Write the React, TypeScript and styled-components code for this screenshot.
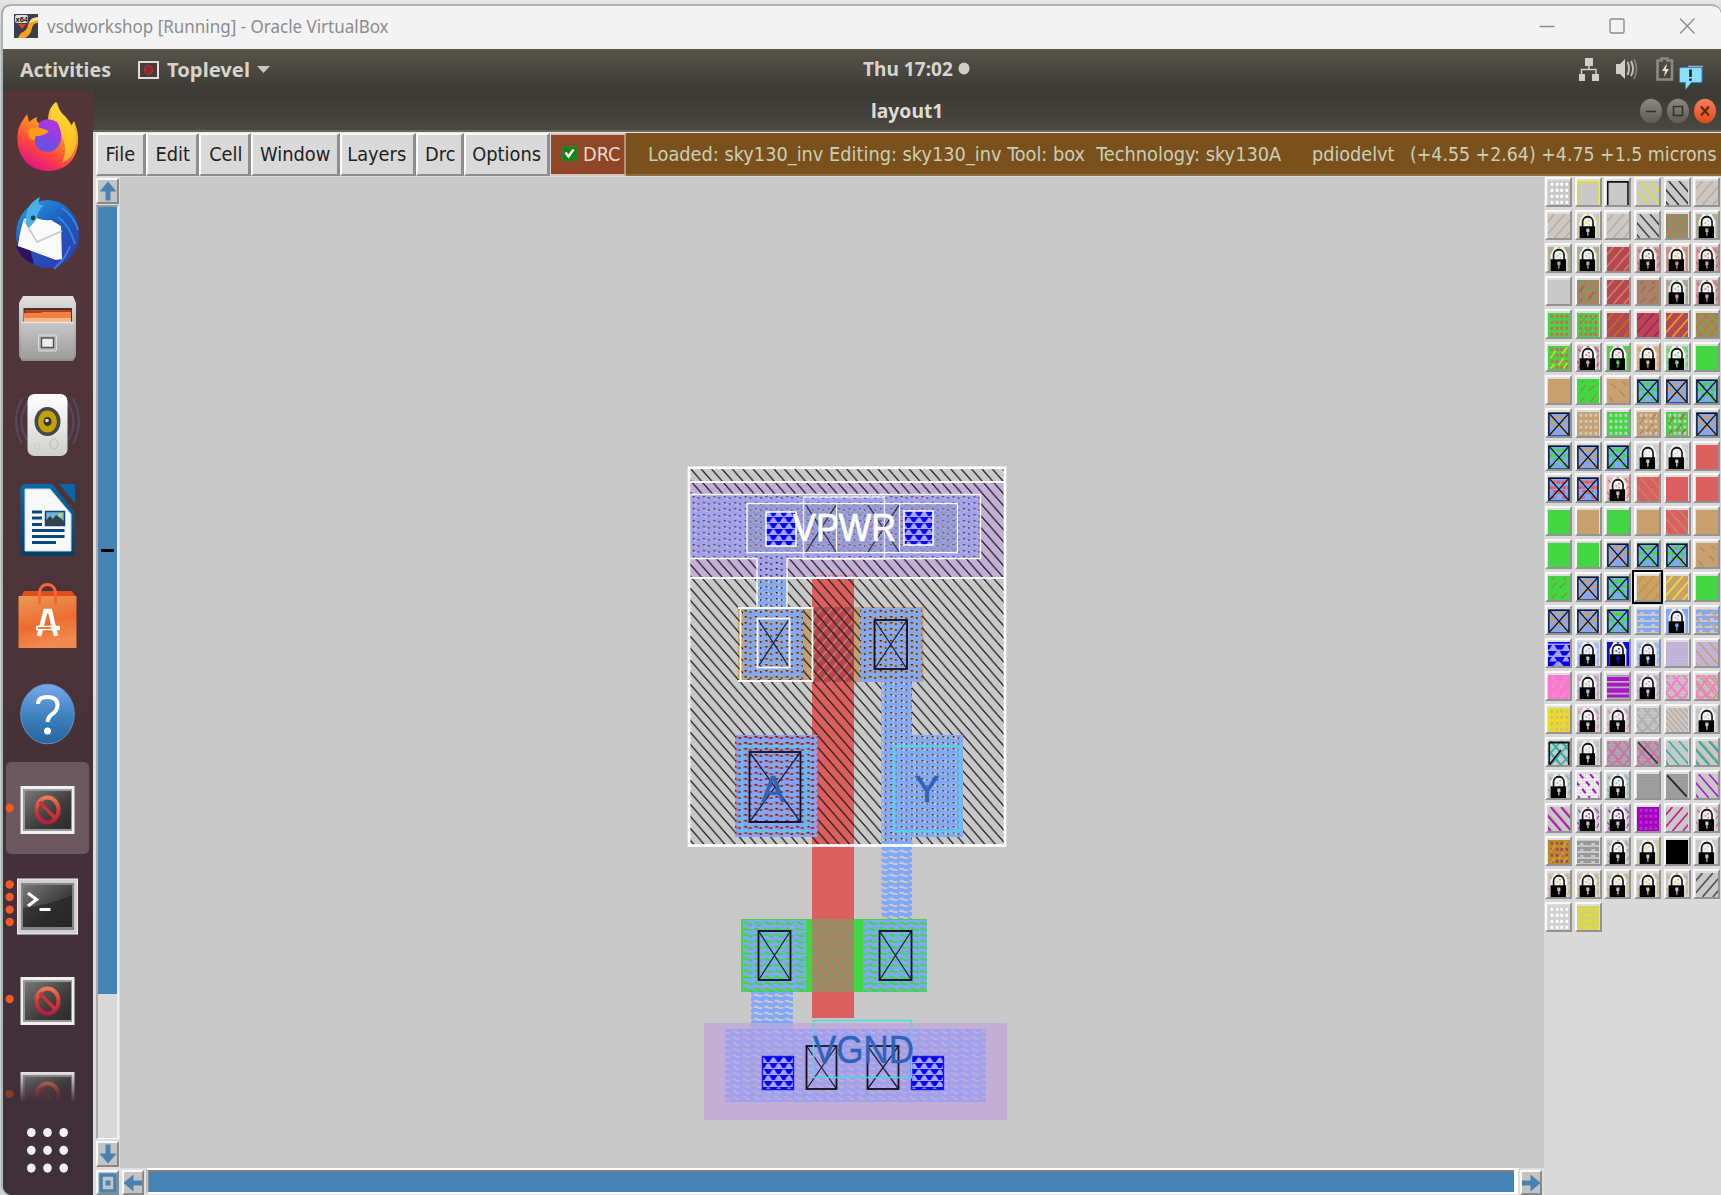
import React from "react";
import styled, { createGlobalStyle } from "styled-components";

const Global = createGlobalStyle`
  * { box-sizing: border-box; }
  html, body { margin: 0; padding: 0; }
  body { width: 1721px; height: 1195px; overflow: hidden; background: #e3e3e3; }
  svg { display: block; }
`;

const tk = `"DejaVu Sans Condensed", "DejaVu Sans", sans-serif`;
const shell = `"Noto Sans", "Open Sans", sans-serif`;

const Desktop = styled.div`
  width: 1721px;
  height: 1195px;
  padding: 4px 0 0 1px;
  background: linear-gradient(180deg, #e6e6e6 0, #e0e0e0 6px, #c9d3d3 30px, #c9d3d3);
  overflow: hidden;
`;
const VmWindow = styled.div`
  height: 1191px;
  border: 2px solid #b0b2b0;
  border-bottom: 0;
  border-right: 0;
  border-radius: 9px 9px 0 10px;
  overflow: hidden;
  background: #3b3a35;
  display: flex;
  flex-direction: column;
`;
const HostTitle = styled.header`
  height: 43px;
  flex: none;
  background: #f3f3f3;
  display: flex;
  align-items: center;
  padding: 0 26px 3px 11px;
`;
const Label = styled.span<{ $w: number; $size: number; $scale: number; $color: string; $bold?: number; $font?: string }>`
  display: block;
  flex: none;
  width: ${(p) => p.$w}px;
  font-family: ${(p) => p.$font ?? shell};
  font-stretch: ${(p) => (p.$font ? "condensed" : "normal")};
  font-size: ${(p) => p.$size}px;
  font-weight: ${(p) => p.$bold ?? 400};
  line-height: 1.2;
  color: ${(p) => p.$color};
  white-space: pre;
  transform: scaleX(${(p) => p.$scale});
  transform-origin: left center;
`;
const Spacer = styled.div<{ $w?: number }>`
  flex: ${(p) => (p.$w ? "none" : "1")};
  width: ${(p) => (p.$w ? p.$w + "px" : "auto")};
`;
const HostButtons = styled.div`
  display: flex;
  gap: 54px;
`;
const TopBar = styled.div`
  height: 41px;
  flex: none;
  background: linear-gradient(180deg, #58544a, #3c3b37);
  display: grid;
  grid-template-columns: 860px 1fr 142px;
`;
const BarGroup = styled.div<{ $pad?: string }>`
  display: flex;
  align-items: center;
  padding: ${(p) => p.$pad ?? "0"};
`;
const Body = styled.div`
  flex: 1;
  min-height: 0;
  display: flex;
`;
const Dock = styled.nav`
  width: 90px;
  flex: none;
  background: linear-gradient(180deg, #54363a 0, #4c3439 45%, #43303a 75%, #40303a 100%);
`;
const Magic = styled.main`
  flex: 1;
  min-width: 0;
  display: flex;
  flex-direction: column;
  background: #d9d9d9;
`;
const MagicTitle = styled.div`
  height: 42px;
  flex: none;
  background: linear-gradient(180deg, #3a3934, #494841);
  border-bottom: 2px solid #68665f;
  display: flex;
  align-items: center;
  padding: 1px 4px 0 778px;
`;
const MenuRow = styled.div`
  height: 45px;
  flex: none;
  display: flex;
  border-top: 1px solid #e8e8e8;
  padding-left: 3px;
  padding-bottom: 1px;
`;
const MenuButton = styled.button<{ $w: number }>`
  width: ${(p) => p.$w}px;
  height: 43px;
  flex: none;
  margin: 0;
  padding: 0 0 2px 4.5px;
  display: flex;
  align-items: center;
  background: #d9d9d9;
  border: solid;
  border-width: 2px;
  border-color: #fbfbfb #8d8d8d #8d8d8d #fbfbfb;
  border-right-width: 3px;
`;
const DrcButton = styled.div`
  width: 75px;
  flex: none;
  margin-left: 1px;
  display: flex;
  align-items: center;
  gap: 6px;
  padding: 0 0 2px 11px;
  background: #8e4627;
  border-top: 2px solid #d5c4bd;
  border-bottom: 2px solid #d5c4bd;
  border-right: 2px solid #b7907d;
`;
const Status = styled.div`
  flex: 1;
  display: flex;
  align-items: center;
  background: #7a511d;
  border-bottom: 2px solid #8f6d40;
  padding-left: 22px;
`;
const Work = styled.div`
  flex: 1;
  min-height: 0;
  display: flex;
`;
const VScroll = styled.div`
  width: 27px;
  flex: none;
  padding: 0 0 0 3px;
  display: flex;
  flex-direction: column;
  background: #dedede;
`;
const Key = styled.div<{ $w: number; $h: number; $mt?: number; $ml?: number }>`
  width: ${(p) => p.$w}px;
  height: ${(p) => p.$h}px;
  flex: none;
  margin-top: ${(p) => p.$mt ?? 0}px;
  margin-left: ${(p) => p.$ml ?? 0}px;
  background: #c3c3c3;
  border: 2px solid;
  border-color: #f8f8f8 #888 #888 #f8f8f8;
  display: flex;
  align-items: center;
  justify-content: center;
`;
const VTrough = styled.div`
  height: 934px;
  width: 23px;
  flex: none;
  margin-top: 1px;
  background: #d9d9d9;
  border: solid;
  border-width: 2px 2px 1px 2px;
  border-color: #999 #e8eef2 #fff #aaa;
`;
const VThumb = styled.div`
  height: 787px;
  background: #4682b4;
  padding: 342px 2px 0 3px;
`;
const Mark = styled.div`
  height: 3px;
  width: 13px;
  background: #000;
`;
const Center = styled.div`
  width: 1424px;
  flex: none;
  display: flex;
  flex-direction: column;
`;
const Canvas = styled.div`
  height: 991px;
  flex: none;
  background: #c8c8c8;
`;
const HScroll = styled.div`
  height: 27px;
  flex: none;
  display: flex;
  background: #dedede;
`;
const HTrough = styled.div`
  width: 1372px;
  height: 26px;
  margin-left: 2px;
  border: solid;
  border-width: 2px 2px 1px 2px;
  border-color: #fff #fff #fff #c0c0c0;
  background: #fff;
`;
const HThumb = styled.div`
  height: 22px;
  background: #4682b4;
  border-top: 2px solid #857f7a;
  border-left: 1px solid #8f8f8f;
  width: 1366px;
`;
const Palette = styled.aside`
  flex: 1;
  padding-left: 1px;
  background: #d9d9d9;
  display: grid;
  grid-template-columns: repeat(6, 29.7px);
  grid-auto-rows: 32.95px;
  align-content: start;
`;
const Cell = styled.div<{ $on: boolean }>`
  width: 27px;
  height: 30px;
  padding: 2px 0 0 0.5px;
  background: #dcdcdc;
  border: 2px solid;
  border-color: #f8f8f8 #939393 #939393 #f8f8f8;
  outline: ${(p) => (p.$on ? "2px solid #000" : "none")};
  outline-offset: 0;
`;

const G = "#c8c8c8", GR = "#42d742", TN = "#c8a070", RD = "#dc5f5f", DR = "#b84850", BR = "#a88268", BL = "#80a8ff", PU = "#a818c8", TL = "#28b0a8", YE = "#e4e020", MG = "#d01890";

/* kind, background, pattern colour, accent colour */
type Sw = [string, string, string?, string?];
const lk = (f = "#999", b = G): Sw => ["lock", b, f];
const X = (c: string, a?: string): Sw => ["x", BL, c, a];
const so = (c: string): Sw => ["solid", c];

const swatches: Sw[][] = [
  [["dots", G, "#fff"], ["frame", G, YE], ["frame", G, "#111"], ["bs", G, YE], ["bs", G, "#333"], ["fs", G, "#c8ab94"]],
  [["fs", G, "#c8ab94"], lk(YE), ["fs", G, "#c8ab94"], ["bs", G, "#444"], ["bs", BR, "#6aa848"], lk("#70d080", "#bba898")],
  [lk("#70d080", "#bba898"), lk("#70d080", "#bba898"), ["fs", DR, "#cc8066"], lk("#c85a60", "#d0a0a0"), lk("#e0a020", "#d09090"), lk("#c85a60", "#d0a0a0")],
  [so(G), ["mix", BR, "#5eb048", "#b85850"], ["fs", DR, "#cc8066"], ["speck", BR, "#b85850"], lk("#70b080", "#bba898"), lk("#c85a60", "#d0a0a0")],
  [["dots", GR, RD], ["dots", GR, RD, BR], ["fs", DR, "#b87020"], ["fs", DR, "#b81870"], ["fs", DR, "#e0a020"], ["cross", BR, "#78a838", "#a08820"]],
  [["dots", GR, RD, "#c8e020"], lk("#c03080", "#c0b0a8"), lk("#e08090", GR), lk(TN, "#e0b090"), lk("#70b070", "#90d890"), so(GR)],
  [so(TN), ["speck", GR, "#888848"], ["speckb", TN, "#b08860"], X(GR), X(TN), X(GR, "#208030")],
  [X(TN), ["dots", TN, G], ["dots", GR, G], ["dots", TN, G, "#b08860"], ["dots", GR, G, "#c06050"], X(TN)],
  [X(GR, G), X(TN, G), X(GR, G), lk("#ddd"), lk("#ddd"), so(RD)],
  [X(RD), X(RD, TN), lk(RD, "#eab8b8"), ["bs", RD, "#c88068"], so(RD), so(RD)],
  [so(GR), so(TN), so(GR), so(TN), ["bs", RD, "#c08868"], so(TN)],
  [so(GR), so(GR), X(TN), X(GR), X(GR, RD), ["speckb", TN, "#b08860"]],
  [["speck", GR, "#888848"], X(TN), X(GR), ["fs", TN, "#c89820"], ["fs", TN, "#f0e030"], so(GR)],
  [X(TN), X(TN, "#f0d020"), X(GR), ["weave", G, BL], lk(BL, BL), ["weave", G, BL, TN]],
  [["tri", "#a8a0e0", "#0000ff"], lk("#80a8ff", "#b8c8f0"), lk("#0000ff", "#0a0af0"), lk("#80a8ff", "#b0c8f8"), ["check", G, "#c0a8e0"], ["check", G, "#c0a8e0", TN]],
  [["speck", "#ff78d0", "#c8a8d8"], lk("#b090c8", "#c8b8d0"), ["bars", PU, "#b8b0b8"], lk("#b090c8", "#c8b8d0"), ["lattice", G, "#ff78c8"], ["lattice", G, "#ff78c8", TN]],
  [["dots", YE, "#e8b070", "#d8d060"], lk("#f070c0"), lk("#f070c0"), ["lattice", G, "#b0b0b0"], ["bs", G, "#d0a888", "#b0b0b0"], lk("#bbb")],
  [["xk", G, TL], lk("#bbb"), ["lattice", "#a8a0a8", "#d070a8"], ["lattice", "#a8a0a8", "#d070a8", "#333"], ["bs", G, TL], ["bs2", G, TL, TN]],
  [lk("#50c0b8"), ["bsd", "#f0f0f0", PU], lk("#50c0b8"), ["check", "#a8a8a8", "#989898"], ["check", "#a8a8a8", "#989898", "#222"], ["bs", G, PU]],
  [["bs2", G, PU, TN], lk(PU), lk(PU), ["dots", "#a000c8", "#c030b0"], ["fs", G, MG], lk("#e050a0")],
  [["dots", "#b89020", "#b04060", "#c8a050"], ["weave", G, "#989898"], lk("#999"), lk(YE), so("#000"), lk("#ccc")],
  [lk("#d0a840"), lk("#d0a840"), lk("#d0a840"), lk("#d0a840"), lk("#d0a840"), ["fs", G, "#555"]],
  [["dots", "#d0d0d0", "#fff"], ["dots", "#d4d070", "#e4e020"]],
];

const Diag = ({ c, back, off = 2, w = 1.1, dash }: { c: string; back?: boolean; off?: number; w?: number; dash?: string }) => (
  <path
    d={[-16, -8, 0, 8, 16, 24].map((k) => (back ? `M${k + off} 0l16 16` : `M${k + off} 16l16 -16`)).join("")}
    stroke={c}
    strokeWidth={w}
    strokeDasharray={dash}
    fill="none"
  />
);
const grid = (nx: number, ny: number) => Array.from({ length: nx * ny }, (_, i) => [i % nx, Math.floor(i / nx)]);

const Swatch = ({ s }: { s: Sw }) => {
  const [kind, bg, f = "#000", a] = s;
  return (
    <svg width="22" height="24" viewBox="0 0 17 16" preserveAspectRatio="none">
      <rect width="17" height="16" fill={bg} />
      {kind === "dots" && grid(4, 4).map(([x, y]) => <rect key={x + "-" + y} x={2 + x * 4 - (x > 1 ? 0.5 : 0)} y={1.2 + y * 4} width="2.1" height="2" fill={f} />)}
      {kind === "dots" && a && <path d="M2 8l4-5M8 13l4-5M11 5l4-4M2 15l3-3M12 15l3-4" stroke={a} strokeWidth="1.2" />}
      {kind === "frame" && <path d="M.6 16V.6H16.2V16" fill="none" stroke={f} strokeWidth="1.2" />}
      {kind === "bs" && <Diag c={f} back />}
      {kind === "bs" && a && <Diag c={a} back off={6} />}
      {kind === "bs2" && <><Diag c={a!} back off={3} w={1.4} /><Diag c={f} back w={1.4} /></>}
      {kind === "bsd" && <><path d={grid(9, 8).map(([x, y]) => `M${x * 2} ${y * 2 + 0.5}h1`).join("")} stroke="#d0d0d0" /><Diag c={f} back w={1.5} dash="4 3" /></>}
      {kind === "fs" && <Diag c={f} w={1.2} off={-3} />}
      {kind === "cross" && <><Diag c={a!} /><Diag c={f} back /></>}
      {kind === "mix" && <><Diag c={f} back dash="5 2" /><path d="M2 8l4-5M9 13l4-5M2 15l2-3" stroke={a} /></>}
      {kind === "speck" && <path d="M3 8l4-4M9 8l5-4M3 2l2-1M12 2l2-1M3 15l3-3M10 15l5-4" stroke={f} strokeWidth="1.1" strokeDasharray="1.4 .5" />}
      {kind === "speckb" && <path d="M3 3l4 3M10 8l4 4M2 12l3 3M12 2l3 2" stroke={f} strokeWidth="1" />}
      {kind === "weave" && [0, 1, 2, 3].map((y) => <path key={y} d={`M0 ${1.3 + y * 4}H17M0 ${2.6 + y * 4}h2.5M5 ${2.6 + y * 4}h6M14 ${2.6 + y * 4}h3`} stroke={f} strokeWidth="1.4" />)}
      {kind === "weave" && a && <Diag c={a} back />}
      {kind === "tri" && <path d="M0 0H17V1H0zM0 2h3L1 5H0zM5 2h8l-2 3H7zM15 2h2v4zM0 6h7L4 9H1zM9 6h8l-3 3h-3zM0 10h3L1 13H0zM5 10h8l-2 3H7zM15 10h2v4zM0 13h7l-3 3H0zM9 13h8v3h-5z" fill={f} />}
      {(kind === "check" || kind === "lattice") && <path d={grid(9, 8).map(([x, y]) => `M${x * 2 + (y % 2)} ${y * 2 + 0.5}h1`).join("")} stroke={kind === "check" ? f : "#b8b0b4"} strokeWidth="1" />}
      {kind === "check" && <rect width="17" height="16" fill={f} opacity=".55" />}
      {kind === "lattice" && <path d="M0 2L2 0M0 4l4 4-4 4M5 0l3 3 3-3M4 8l4-5 5 5-4 5zM13 0l4 4M17 4l-4 4 4 4M0 12l4 4M4 16l4-3 4 3M13 16l4-4" stroke={f} strokeWidth="1.5" fill="none" />}
      {(kind === "check" || kind === "lattice") && a && (a === "#333" || a === "#222" ? <path d="M1 1L16 15" stroke={a} strokeWidth="1.2" /> : <Diag c={a} back />)}
      {kind === "bars" && <path d="M0 .8H17M0 4.6H17M0 8.2H17M0 12.4H17M0 15.6H17" stroke={f} strokeWidth="1.2" />}
      {kind === "x" && (
        <>
          <path d="M3 3.5H14M1 7h5M11 7h5M4 10h9M2 13.5h4M11 13.5h4" stroke={f} strokeWidth="2.2" strokeDasharray="3 .6" />
          <path d="M0 .7H17" stroke={f} strokeDasharray="2 2" />
          {a && <path d="M5 5h1.5M11 11h2M5 11h1.5M11 5h1.5" stroke={a} strokeWidth="1.5" />}
          <path d="M1 1L16 15.5M16 1L1 15.5" stroke="#0b1420" strokeWidth=".9" />
          <path d="M.7 16V.8H16.200V16" fill="none" stroke="#0b1420" strokeWidth="1.1" />
          <path d="M1 15.700H16" stroke="#20406c" strokeWidth=".6" />
        </>
      )}
      {kind === "xk" && <><Diag c={f} back w={1.6} /><Diag c={f} /><path d="M1 1H16V16M1 16V1M1 16L10 6" fill="none" stroke="#111" strokeWidth="1.2" /></>}
      {kind === "lock" && (
        <>
          <path d="M1 2l2 2M14 1l3 3M0 10l2 2M15 8l2-2M15 14l2-3M1 15l1-2" stroke={f} strokeWidth="1" opacity=".8" />
          <path d="M2 9V5l3-5h7l3 5v11H2z" fill="#f2f2f0" />
          <path d="M7.5 0h2v1h-2zM6.5 5.5h1.5v1H6.5zM8.5 4h1.5v1H8.5zM9 6.5h1v1H9z" fill={f} opacity=".8" />
          <path d="M4.3 9V5.2C4.8 .7 12 .7 12.4 5.2V9" fill="none" stroke="#181818" strokeWidth="1.3" />
          <rect x="2" y="8.2" width="12" height="7.8" fill="#000" />
          <path d="M7.2 9.6h2.4v2.4h-.7v2H7.900v-2h-.7z" fill={bg} />
          <path d="M7.900 13.500h1v1.500h-1z" fill={f} opacity=".5" />
        </>
      )}
    </svg>
  );
};

const Contact = ({ x, y, w, h, c = "#101018", b }: { x: number; y: number; w: number; h: number; c?: string; b?: string }) => (
  <g fill="none">
    <path d={`M${x} ${y}l${w} ${h}M${x + w} ${y}l${-w} ${h}`} stroke="#1c2030" strokeWidth="1.3" />
    <rect x={x} y={y} width={w} height={h} stroke={b ?? c} strokeWidth="1.8" />
  </g>
);

const Layout = () => (
  <svg width="1424" height="991" viewBox="120 177 1424 991" fontFamily='"Liberation Sans", Arial, sans-serif'>
    <defs>
      <pattern id="well" width="8" height="8" patternUnits="userSpaceOnUse" patternTransform="translate(690 468) scale(1.3 1.5)">
        <path d="M-1 -1L9 9M-1 7L1 9M7 -1L9 1" stroke="#1c1c1c" strokeWidth=".85" />
      </pattern>
      <pattern id="li" width="8" height="4" patternUnits="userSpaceOnUse" patternTransform="translate(743 608) scale(1.3 1.5)">
        <path fillRule="evenodd" d="M0 0H8V4H0zM.3 1.200H3.700V2H7V3.400H3.200V2.600H.3z" fill="#80a8ff" />
      </pattern>
      <pattern id="psub" width="8" height="4" patternUnits="userSpaceOnUse" patternTransform="translate(690 495) scale(1.3 1.5)">
        <rect width="8" height="4" fill="#9fa0ee" />
        <path d="M.5 1h3v1h3v1.100h-3.500v-1H.5z" fill="#c2acd8" />
      </pattern>
      <pattern id="nsd" width="8" height="8" patternUnits="userSpaceOnUse" patternTransform="translate(747 504) scale(1.3 1.5)">
        <path d="M1 1.500h1.200M5 5.500h1.400" stroke="#48b860" />
        <path d="M3 3.500h1.500M6 7.500h1" stroke="#b88c9c" />
        <path d="M0 5.500h1.500M4 1.500h1.500" stroke="#9088b8" />
      </pattern>
      <pattern id="psd" width="8" height="8" patternUnits="userSpaceOnUse" patternTransform="scale(1.3 1.5)">
        <path d="M1 1.500h1.200M5 3.500h1.200M2 5.500h1M6 7h1" stroke="#cc98a0" strokeWidth=".8" />
      </pattern>
      <pattern id="hatchdots" width="8" height="4" patternUnits="userSpaceOnUse" patternTransform="translate(743 608) scale(1.3 1.5)">
        <path d="M1.200 1.900h1.500M5 2.600h1.300" stroke="#20242c" strokeWidth="1" />
      </pattern>
      <pattern id="purple" width="2" height="2" patternUnits="userSpaceOnUse" patternTransform="scale(1.3 1.5)">
        <rect width="2" height="2" fill="#c6b4d2" />
        <path d="M0 .5h1M1 1.500h1" stroke="#c0a8da" />
      </pattern>
      <pattern id="via" width="8" height="8" patternUnits="userSpaceOnUse" patternTransform="translate(763 1057) scale(1.3 1.5)">
        <rect width="8" height="8" fill="#a8a4ee" />
        <path d="M0 0h8v.4H0zM.8 .4h6.400L5 3.400h-2zM0 4.200h3.200L1 7.400H0zM4.800 4.200h3.200v3.200H7zM0 4h8v.4H0z" fill="#0000ff" />
      </pattern>
      <pattern id="gate" width="8" height="8" patternUnits="userSpaceOnUse" patternTransform="translate(812 608) scale(1.3 1.5)">
        <path d="M-1 9L9 -1" stroke="#d08468" strokeWidth=".9" />
      </pattern>
      <pattern id="ngate" width="8" height="8" patternUnits="userSpaceOnUse" patternTransform="translate(816 920) scale(1.3 1.5)">
        <path d="M-1 -1L9 9M-1 7L1 9M7 -1L9 1" stroke="#62b04a" strokeWidth=".9" />
      </pattern>
    </defs>

    <rect x="690" y="483" width="315" height="94" fill="url(#purple)" />
    <rect x="812" y="577" width="42" height="441" fill="#dc5f5f" />
    <path d="M812 575.500H854" stroke="#d08090" strokeDasharray="3 1" />
    <rect x="738" y="607" width="75" height="75" fill={TN} />
    <rect x="854" y="607" width="69.500" height="75" fill={TN} />
    <rect x="812" y="607" width="42" height="75" fill={DR} />
    <rect x="812" y="607" width="42" height="75" fill="url(#gate)" />
    <rect x="690" y="468" width="315" height="377" fill="url(#well)" />

    <rect x="690" y="495" width="290" height="63" fill="url(#psub)" />
    <rect x="758" y="556" width="29" height="21" fill="url(#psub)" />
    <rect x="690" y="495" width="290" height="63" fill="url(#hatchdots)" opacity=".75" />
    <rect x="758" y="578" width="29" height="29" fill={G} />
    <rect x="758" y="578" width="29" height="29" fill="url(#li)" />
    <rect x="758" y="558" width="29" height="49" fill="url(#hatchdots)" />
    <rect x="747" y="504" width="210" height="48" fill="#8c90c8" opacity=".3" />
    <rect x="747" y="504" width="210" height="48" fill="url(#nsd)" />

    <rect x="743" y="608" width="60" height="71" fill={TN} />
    <rect x="743" y="608" width="60" height="71" fill="url(#li)" />
    <rect x="743" y="608" width="60" height="71" fill="url(#hatchdots)" />
    <rect x="860" y="608" width="62" height="74" fill={TN} />
    <rect x="860" y="608" width="62" height="74" fill="url(#li)" />
    <rect x="860" y="608" width="62" height="74" fill="url(#hatchdots)" />

    <rect x="881.500" y="682" width="30.500" height="237" fill={G} />
    <rect x="881.500" y="735" width="81.500" height="102" fill={G} />
    <path d="M881.500 682H912V735H963V837H912V919H881.500z" fill="url(#li)" />
    <path d="M881.500 682H912V735H963V837H912V845H881.500z" fill="url(#hatchdots)" />
    <rect x="735" y="735" width="82.500" height="102" fill={RD} />
    <rect x="735" y="735" width="82.500" height="102" fill="url(#li)" />
    <rect x="735" y="735" width="82.500" height="102" fill="url(#hatchdots)" />
    <rect x="741.500" y="746" width="65" height="85.500" fill="#70b0ff" fillOpacity=".1" stroke="#50ccea" strokeWidth="1.800" />
    <rect x="894.500" y="746" width="65" height="85.500" fill="#70b0ff" fillOpacity=".12" stroke="#50d4ea" strokeWidth="2.200" />
    <Contact x={749.5} y={752} w={51} h={70} />
    <g fill="#2f62b8" stroke="#2f62b8" strokeWidth=".6">
      <text x="761.500" y="801.500" fontSize="37" textLength="23" lengthAdjust="spacingAndGlyphs">A</text>
      <text x="914.500" y="801.500" fontSize="37" textLength="25" lengthAdjust="spacingAndGlyphs">Y</text>
    </g>

    <g fill="none" stroke="#fff">
      <rect x="689" y="467.800" width="316" height="377.700" strokeWidth="2.700" />
      <path d="M690 482H1004M690 578H1004" strokeWidth="2" />
      <path d="M690 494.500H980.500V558.500H787V607M690 558.500H757V607" strokeWidth="1.400" />
      <rect x="747" y="503.500" width="210.500" height="49" strokeWidth="1.300" />
      <rect x="803.500" y="497" width="81" height="62" strokeWidth="1.600" opacity=".75" />
      <path d="M836.500 504V552M899.500 504V552" strokeWidth="1.300" />
      <path d="M740.500 608V680.500M738 608H812.500V681H738" strokeWidth="1.800" />
    </g>
    <path d="M806 505l30 47M836 505l-30 47M868 505l31 47M899 505l-31 47" stroke="#303044" strokeWidth="1.300" />
    <rect x="766" y="512" width="30" height="34" fill="url(#via)" stroke="#fff" strokeWidth="1.500" />
    <rect x="904" y="511" width="29" height="34" fill="url(#via)" stroke="#fff" strokeWidth="1.500" />
    <Contact x={757.5} y={618.5} w={32} h={49} b="#fff" />
    <Contact x={874.500} y={620} w={32.500} h={49} />
    <text x="793" y="540.500" fontSize="38" textLength="103" lengthAdjust="spacingAndGlyphs" fill="#fff" stroke="#fff" strokeWidth=".7">VPWR</text>

    <rect x="741" y="919" width="186" height="73" fill={GR} />
    <rect x="743" y="920" width="63" height="71" fill="url(#li)" />
    <rect x="863" y="920" width="64" height="71" fill="url(#li)" />
    <rect x="812" y="919" width="42" height="73" fill={BR} />
    <rect x="812" y="919" width="42" height="73" fill="url(#ngate)" />
    <Contact x={758.500} y={931} w={32} h={49} />
    <Contact x={879.500} y={931} w={32} h={49} />
    <rect x="751" y="992" width="42" height="34" fill="url(#li)" />

    <rect x="704" y="1023" width="303" height="97" fill="url(#purple)" />
    <rect x="725" y="1029" width="261" height="73" fill="url(#psub)" />
    <rect x="751" y="1023" width="42" height="6" fill="#a4a4ea" opacity=".7" />
    <rect x="745" y="1044" width="210" height="46" fill="url(#psd)" />
    <Contact x={806.500} y={1046} w={30} h={43} />
    <Contact x={867.500} y={1046} w={31} h={43} />
    <rect x="762.500" y="1056.500" width="31" height="33" fill="url(#via)" stroke="#1818ee" strokeWidth="1.400" />
    <rect x="911.500" y="1056.500" width="32" height="33" fill="url(#via)" stroke="#1818ee" strokeWidth="1.400" />
    <rect x="813.500" y="1020.500" width="98" height="57" fill="#80b0ff" fillOpacity=".06" stroke="#48dce0" strokeWidth="1.500" />
    <text x="813" y="1063" fontSize="38" textLength="101" lengthAdjust="spacingAndGlyphs" fill="#2f62b8" stroke="#2f62b8" strokeWidth=".4">VGND</text>
  </svg>
);

const NoEntry = ({ y, o = 1 }: { y: number; o?: number }) => (
  <g opacity={o}>
    <rect x="20.500" y={y} width="54" height="48" fill="#f0f0f0" />
    <rect x="23" y={y + 3} width="49" height="42" fill="#989898" />
    <rect x="25" y={y + 5} width="46" height="38" fill="url(#screen)" />
    <ellipse cx="47.500" cy={y + 24} rx="11" ry="12.500" fill="none" stroke="url(#ring)" strokeWidth="4" />
    <path d={`M39.500 ${y + 16}l16 16.500`} stroke="#d03038" strokeWidth="3.600" />
  </g>
);

const DockArt = () => (
  <svg width="90" height="1105" viewBox="3 90 90 1105">
    <defs>
      <linearGradient id="fox" x1=".8" y1="0" x2=".3" y2="1"><stop offset="0" stopColor="#fff44f" /><stop offset=".4" stopColor="#ff9a20" /><stop offset=".7" stopColor="#ff4a3c" /><stop offset="1" stopColor="#e0108a" /></linearGradient>
      <linearGradient id="orb" x1=".7" y1="0" x2=".3" y2="1"><stop offset="0" stopColor="#b833e1" /><stop offset="1" stopColor="#5a55e8" /></linearGradient>
      <linearGradient id="bird" x1="0" y1="0" x2=".6" y2="1"><stop offset="0" stopColor="#30a0e8" /><stop offset=".5" stopColor="#1c5fc0" /><stop offset="1" stopColor="#3040b8" /></linearGradient>
      <linearGradient id="metal" x1="0" y1="0" x2="0" y2="1"><stop offset="0" stopColor="#e0e0e0" /><stop offset="1" stopColor="#8e8e8e" /></linearGradient>
      <linearGradient id="white" x1="0" y1="0" x2="0" y2="1"><stop offset="0" stopColor="#fff" /><stop offset="1" stopColor="#cfd0cc" /></linearGradient>
      <linearGradient id="doc" x1="0" y1="0" x2="0" y2="1"><stop offset="0" stopColor="#0a6aa8" /><stop offset="1" stopColor="#054068" /></linearGradient>
      <linearGradient id="bag" x1="0" y1="0" x2=".3" y2="1"><stop offset="0" stopColor="#e89a58" /><stop offset=".6" stopColor="#ee6c30" /><stop offset="1" stopColor="#f08a50" /></linearGradient>
      <linearGradient id="help" x1="0" y1="0" x2="0" y2="1"><stop offset="0" stopColor="#78a8ee" /><stop offset=".55" stopColor="#3c80bc" /><stop offset="1" stopColor="#28649c" /></linearGradient>
      <linearGradient id="screen" x1="0" y1="0" x2="1" y2="1"><stop offset="0" stopColor="#777" /><stop offset=".6" stopColor="#3c3c3c" /><stop offset="1" stopColor="#2c2c2c" /></linearGradient>
      <linearGradient id="ring" x1="0" y1="0" x2="0" y2="1"><stop offset="0" stopColor="#f07858" /><stop offset=".5" stopColor="#d83838" /><stop offset="1" stopColor="#b81c40" /></linearGradient>
      <linearGradient id="fade" x1="0" y1="0" x2="0" y2="1"><stop offset="0" stopColor="#40303a" stopOpacity="0" /><stop offset="1" stopColor="#42303a" /></linearGradient>
    </defs>
    <path d="M21 123Q25 117 27 114L29 122Q34 118 37 117Q35 123 42 124L49 126L48 118Q49 107 56 102Q59 112 65 116Q70 122 71 126L74 121Q79 133 78 143C76 162 64 171 47.500 171C30 171 18 157 17.500 141Q17 130 21 123z" fill="url(#fox)" />
    <path d="M49 122Q54 105 57 102Q60 114 68 120Q77 130 76 143Q74 158 62 163Q68 150 62 135Q56 122 49 122z" fill="#ffd92c" opacity=".7" />
    <path d="M39 123Q47 116 57 122Q62 130 61 140C59 149 51 154 43 151C34 148 33 139 37 134z" fill="url(#orb)" />
    <path d="M27 130Q34 126 41 128L49 131Q45 136 36 136L34 141Q27 137 27 130z" fill="#ff9a1c" />

    <ellipse cx="47.500" cy="234" rx="31.500" ry="34" fill="url(#bird)" />
    <path d="M16 246Q21 260 34 264L30 249z" fill="#2a1260" />
    <path d="M24 219L32 215Q38 221 51 220L61 226L62 259L56 260L18 246Q20 230 24 219z" fill="#fafafa" />
    <path d="M24 220L37 242L62 231" fill="none" stroke="#c8c8c8" strokeWidth="1.500" />
    <path d="M26 224Q24 205 40 197Q36 207 44 205Q38 210 36 220L29 228z" fill="#4ab0ea" />
    <circle cx="33" cy="218" r="2.400" fill="#283a50" />
    <path d="M58 217Q70 226 75 244M54 269Q66 258 70 246M62 208Q74 216 78 230" stroke="#4098e0" strokeWidth="2" fill="none" opacity=".7" />

    <path d="M23 296H73L76 303V356L73 361H22L19 356V303z" fill="url(#metal)" />
    <rect x="23.500" y="308" width="48.500" height="14" fill="#403830" />
    <rect x="25" y="310" width="46" height="7" fill="#b84010" /><path d="M24 313h16l3-1h28v9H24z" fill="#f08048" /><rect x="24" y="318" width="47" height="4" fill="#f4b880" />
    <rect x="21" y="322" width="53" height="37" fill="#fff" opacity=".12" />
    <path d="M21 322.500H74" stroke="#e4e4e4" strokeWidth="1.500" />
    <rect x="38.500" y="335" width="18" height="16" rx="1" fill="#b8b8b8" stroke="#ddd" /><rect x="41.500" y="338" width="12" height="9.500" fill="#eee" stroke="#555" strokeWidth="1.500" />

    <path d="M22 399Q10 421 22 444M27 403Q16 422 27 440M73 399Q85 421 73 444M68 403Q79 422 68 440" fill="none" stroke="#5f73a8" strokeWidth="2" opacity=".35" />
    <rect x="27.500" y="394" width="40" height="62" rx="7" fill="url(#white)" />
    <ellipse cx="47.500" cy="421.500" rx="13" ry="14.500" fill="#44484c" /><ellipse cx="47.500" cy="421.500" rx="9.500" ry="11" fill="#c4a000" /><ellipse cx="47.500" cy="421.500" rx="4" ry="4.500" fill="#303438" /><circle cx="47" cy="420.500" r="1.800" fill="#ddd" />
    <ellipse cx="54" cy="444" rx="4" ry="5" fill="none" stroke="#bbb" /><circle cx="37" cy="446" r="3" fill="none" stroke="#ccc" />

    <path d="M23 484H52L74.500 512V553Q74 556 71 556H23Q20.500 556 20.500 553V487z" fill="url(#doc)" />
    <path d="M25 489H50L71 514V551H25z" fill="#f8f8f8" stroke="#c8d4dc" />
    <path d="M59 484H73Q75 484 75 487V503z" fill="#0b68a4" />
    <path d="M32 512h10M32 518h10M32 524.500h10M32 530.500h32.500M32 536.500h32.500M32 542.500h24" stroke="#0a4a78" strokeWidth="3" />
    <rect x="45.500" y="511.500" width="19" height="14" fill="#6cb4dc" stroke="#0a4a78" strokeWidth="1.500" /><path d="M46 525v-5l4-4 3 3 3-4 4 3 4 3v4z" fill="#33424c" /><circle cx="60.500" cy="515" r="2" fill="#f0c830" />

    <path d="M21 597L24 591H72L76 597z" fill="#e04c1c" />
    <rect x="18.500" y="596" width="58" height="52" fill="url(#bag)" />
    <path d="M39.500 604V592Q41 584.500 47.500 584.500Q54 584.500 55.500 592V604" fill="none" stroke="#f06838" strokeWidth="3" />
    <path d="M39 636L45.500 611H50L56 636M36 628H60" fill="none" stroke="#fff" strokeWidth="4.500" /><path d="M38 628H51" stroke="#f08028" strokeWidth="2" />

    <ellipse cx="47.500" cy="714" rx="26.800" ry="29.800" fill="url(#help)" stroke="#5a94cc" />
    <path d="M38 704Q38 697 47.500 697Q57.500 697 57.500 705Q57.500 711 51 715Q48 717.500 47.500 722" fill="none" stroke="#fff" strokeWidth="4" /><circle cx="47.500" cy="731" r="3.500" fill="#fff" />

    <rect x="6" y="762" width="83" height="92" rx="5" fill="#6c585e" />
    <NoEntry y={786} />
    <rect x="17.500" y="879" width="60" height="55" fill="#d0d0d0" stroke="#f0f0f0" /><rect x="21" y="883" width="53" height="47" fill="#858585" /><rect x="23" y="885" width="49" height="42" fill="url(#screen)" /><path d="M23 908Q50 905 72 895V927H23z" fill="#222" opacity=".6" />
    <path d="M28 893l8.500 6.500-8.500 6.500" fill="none" stroke="#fff" strokeWidth="3.300" /><path d="M39.500 909.500H50.500" stroke="#fff" strokeWidth="3" />
    <NoEntry y={977} />
    <NoEntry y={1072} />
    <rect x="18" y="1070" width="60" height="32" fill="url(#fade)" /><rect x="18" y="1101" width="60" height="22" fill="#42303a" />
    {[808, 884.5, 897, 909.6, 922, 999].map((y) => <circle key={y} cx="9.700" cy={y} r="4.200" fill="#f05a24" />)}
    <circle cx="9.700" cy="1094" r="4" fill="#8a3c2c" />
    {grid(3, 3).map(([x, y]) => <ellipse key={x + "" + y} cx={31.3 + x * 16.2} cy={1132.5 + y * 17.800} rx="4.300" ry="4.600" fill="#f2f2f2" />)}
  </svg>
);

const menus: [string, number, number][] = [
  ["File", 50, 35], ["Edit", 53, 40], ["Cell", 52, 40], ["Window", 89, 75], ["Layers", 76, 60], ["Drc", 48, 35], ["Options", 86, 72],
];

const Arrow = ({ r }: { r: number }) => (
  <svg width="18" height="20" viewBox="0 0 18 20">
    <path transform={`rotate(${r} 9 10)`} d="M9 0.500L17.500 10.500H11.500V19.500H6.500V10.500H.5z" fill="#4682b4" />
  </svg>
);

const App = () => (
  <>
    <Global />
    <Desktop>
      <VmWindow>
        <HostTitle>
          <svg width="24" height="24" viewBox="0 0 24 24">
            <rect width="24" height="24" fill="#3a3f50" />
            <path d="M24 4Q16 3 14 11Q13 17 7 19L4 24H11Q17 21 18 14Q19 9 24 9z" fill="#ffa01e" />
            <path d="M24 3Q17 3 15 9L24 6z" fill="#ffe2a0" /><path d="M4 10h8l-4 5z" fill="#e84018" />
            <rect x="1" y="1" width="13" height="8" rx="2" fill="#ddd" />
            <text x="1.500" y="7.800" fontSize="7.500" fontWeight="700" fontFamily="Liberation Sans, sans-serif" fill="#111">x64</text>
          </svg>
          <Spacer $w={9} />
          <Label $w={342} $size={18.5} $scale={0.918} $color="#8c8c8c">vsdworkshop [Running] - Oracle VirtualBox</Label>
          <Spacer />
          <HostButtons>
            <svg width="16" height="16"><path d="M.5 8.500H15.500" stroke="#8c8c8c" strokeWidth="1.300" /></svg>
            <svg width="16" height="16"><rect x="1" y="1" width="14" height="14" rx="1.500" fill="none" stroke="#8c8c8c" strokeWidth="1.400" /></svg>
            <svg width="16" height="16"><path d="M1 .5L15.500 15.500M15.500 .5L1 15.500" stroke="#8c8c8c" strokeWidth="1.300" /></svg>
          </HostButtons>
        </HostTitle>
        <TopBar>
          <BarGroup $pad="0 0 0 16.500px">
            <Label $w={118.5} $size={20} $scale={0.98} $bold={700} $color="#d6d4cc">Activities</Label>
            <svg width="21" height="18"><rect x="1" y="1" width="19" height="16" fill="#4a3a3a" stroke="#ddd" strokeWidth="2" /><ellipse cx="10.500" cy="9" rx="4" ry="4.500" fill="#8a2a30" stroke="#b83840" /></svg>
            <Spacer $w={8} />
            <Label $w={90} $size={20} $scale={1.01} $bold={700} $color="#d6d4cc">Toplevel</Label>
            <svg width="13" height="7"><path d="M0 0H13L6.500 7z" fill="#c8c6c0" /></svg>
          </BarGroup>
          <BarGroup $pad="0 0 2px 0">
            <Label $w={95} $size={20} $scale={0.955} $bold={700} $color="#d6d4cc">Thu 17:02</Label>
            <svg width="12" height="13"><ellipse cx="6" cy="6.500" rx="5.500" ry="6" fill="#d0cec8" /></svg>
          </BarGroup>
          <svg width="142" height="41" viewBox="1579 49 142 41">
            <path d="M1585 58h8v8h-8zM1578 74h7v7h-7zM1592 74h7v7h-7z" fill="#d0cec8" /><path d="M1589 66v4M1581.500 75v-5.500H1596V75" stroke="#d0cec8" fill="none" strokeWidth="1.500" />
            <path d="M1616 64h4l5-5v20l-5-5h-4z" fill="#d0cec8" /><path d="M1627.500 62q3 6 0 13M1631 61q4 8 0 15" fill="none" stroke="#c0beb8" strokeWidth="2" /><path d="M1634 59q5 10 0 20" fill="none" stroke="#807e78" strokeWidth="1.800" />
            <path d="M1657.500 60.500h4v-2h6v2h4.500V79.500h-14.500z" fill="none" stroke="#8c8a84" strokeWidth="2.600" /><path d="M1667 63l-5 8h3l-1 6 5-8h-3z" fill="#ddd" />
            <path d="M1688 66.500h15" stroke="#aaa" strokeWidth="1.500" />
            <path d="M1681 67.500h20q1 0 1 1.500v12q0 1.500-1 1.500h-9.500l-6 7v-7h-4.500q-1.500 0-1.500-1.500v-12q0-1.500 1.500-1.500z" fill="#8ae0fc" stroke="#2d88d8" />
            <path d="M1690.500 69.500v7.500M1690.500 78.500v2.200" stroke="#152028" strokeWidth="2.600" />
          </svg>
        </TopBar>
        <Body>
          <Dock><DockArt /></Dock>
          <Magic>
            <MagicTitle>
              <Label $w={80} $size={20} $scale={0.965} $bold={700} $color="#dfdbd2">layout1</Label>
              <Spacer />
              <svg width="78" height="28" viewBox="0 0 78 28">
                <defs>
                  <linearGradient id="gb" x1="0" y1="0" x2="0" y2="1"><stop offset="0" stopColor="#8c8a80" /><stop offset="1" stopColor="#5c5a52" /></linearGradient>
                  <linearGradient id="cb" x1="0" y1="0" x2="0" y2="1"><stop offset="0" stopColor="#f58060" /><stop offset="1" stopColor="#e04818" /></linearGradient>
                </defs>
                <ellipse cx="12" cy="14" rx="11" ry="12.300" fill="url(#gb)" /><path d="M7 14.500h10" stroke="#33322c" strokeWidth="1.500" />
                <ellipse cx="39" cy="14" rx="11" ry="12.300" fill="url(#gb)" /><rect x="34.500" y="9.500" width="9" height="9" fill="none" stroke="#33322c" strokeWidth="1.500" />
                <ellipse cx="66" cy="14" rx="11" ry="12.300" fill="url(#cb)" /><path d="M62 9.500l8 9M70 9.500l-8 9" stroke="#5a2810" strokeWidth="2" />
              </svg>
            </MagicTitle>
            <MenuRow>
              {menus.map(([name, w, tw]) => (
                <MenuButton key={name} $w={w}>
                  <Label $w={tw} $size={20} $scale={0.99} $font={tk} $color="#222">{name}</Label>
                </MenuButton>
              ))}
              <DrcButton>
                <svg width="15" height="15"><rect width="15" height="15" fill="#148414" /><path d="M0 15V0H15" fill="none" stroke="#707070" /><path d="M3.500 6.500l3 4 5-7" fill="none" stroke="#fff" strokeWidth="2.500" /></svg>
                <Label $w={38} $size={20} $scale={0.99} $font={tk} $color="#e8d8cc">DRC</Label>
              </DrcButton>
              <Status>
                <Label $w={664} $size={20} $scale={0.988} $font={tk} $color="#c8cfb6">{"Loaded: sky130_inv Editing: sky130_inv Tool: box  Technology: sky130A"}</Label>
                <Label $w={98} $size={20} $scale={0.98} $font={tk} $color="#c8cfb6">pdiodelvt</Label>
                <Label $w={310} $size={20} $scale={0.967} $font={tk} $color="#c8cfb6">(+4.55 +2.64) +4.75 +1.5 microns</Label>
              </Status>
            </MenuRow>
            <Work>
              <VScroll>
                <Key $w={23} $h={26} $mt={1}><Arrow r={0} /></Key>
                <VTrough><VThumb><Mark /></VThumb></VTrough>
                <Key $w={23} $h={26} $mt={2}><Arrow r={180} /></Key>
                <Key $w={23} $h={25} $mt={3}>
                  <svg width="18" height="20"><rect x="2" y="2" width="14" height="16" fill="none" stroke="#4682b4" strokeWidth="3.500" /><rect x="6.500" y="7.500" width="5" height="5" fill="#4682b4" /></svg>
                </Key>
              </VScroll>
              <Center>
                <Canvas><Layout /></Canvas>
                <HScroll>
                  <Key $w={22} $h={25} $mt={2} $ml={2}><Arrow r={-90} /></Key>
                  <HTrough><HThumb /></HTrough>
                  <Key $w={22} $h={25} $mt={2} $ml={2}><Arrow r={90} /></Key>
                </HScroll>
              </Center>
              <Palette>
                {swatches.flatMap((row, r) => row.map((s, c) => (
                  <Cell key={r + "-" + c} $on={r === 12 && c === 3}><Swatch s={s} /></Cell>
                )))}
              </Palette>
            </Work>
          </Magic>
        </Body>
      </VmWindow>
    </Desktop>
  </>
);

export default App;
